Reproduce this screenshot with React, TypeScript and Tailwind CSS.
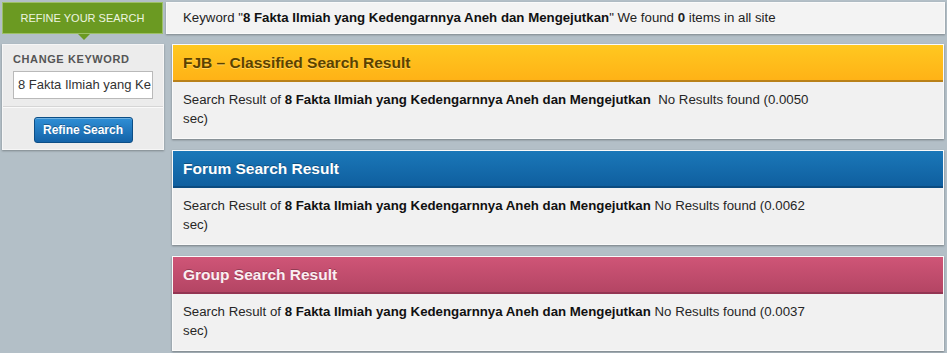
import React from "react";

const KW = "8 Fakta Ilmiah yang Kedengarnnya Aneh dan Mengejutkan";

function Panel({
  title,
  headerClass,
  titleClass,
  time,
  extraSpace,
}: {
  title: string;
  headerClass: string;
  titleClass: string;
  time: string;
  extraSpace?: boolean;
}) {
  return (
    <div className="border border-[#fafafa] bg-[#f1f1f1] shadow-[0_1px_2px_rgba(0,0,0,0.35)]">
      <div className={`h-[37px] flex items-center px-[10px] border-b-[2px] ${headerClass}`}>
        <span className={`text-[15.5px] font-bold ${titleClass}`}>{title}</span>
      </div>
      <div className="h-[56px] px-[10px] pt-[8px] text-[13.25px] leading-[19px] text-[#262626]">
        <div className="w-[632px]">
          Search Result of <b className="text-[#111]">{KW}</b>
          {extraSpace ? "\u00a0 " : " "}No Results found ({time} sec)
        </div>
      </div>
    </div>
  );
}

export default function App() {
  return (
    <div
      className="w-[947px] h-[353px] overflow-hidden bg-[#b3bfc7] relative"
      style={{ fontFamily: '"Liberation Sans", Arial, sans-serif' }}
    >
      <div className="flex gap-[3px] pt-[2px] pl-[2px] pr-[2px]">
        <div className="relative w-[161px] h-[32px] bg-[#6b9a22] border border-[#9dc066] flex items-center justify-center">
          <span className="text-[11px] text-[#eef5e0]">REFINE YOUR SEARCH</span>
          <div className="absolute left-[75px] top-[31px] w-0 h-0 border-l-[6px] border-r-[6px] border-t-[6px] border-l-transparent border-r-transparent border-t-[#6b9a22]" />
        </div>
        <div className="flex-1 h-[32px] bg-[#f3f3f3] border border-[#fafafa] shadow-[0_1px_2px_rgba(0,0,0,0.3)] flex items-center pl-[16px] text-[13.25px] text-[#222]">
          <span>
            Keyword "<b className="text-[#111]">{KW}</b>" We found <b>0</b> items in all site
          </span>
        </div>
      </div>

      <div className="flex gap-[8px] pl-[2px] pr-[3px] pt-[10px]">
        <div className="w-[162px] shrink-0 self-start bg-[#ececec] border border-[#f6f6f6] shadow-[0_1px_2px_rgba(0,0,0,0.3)]">
          <div className="px-[10px] pt-[8px] pb-[7px] border-b border-[#d6d6d6]">
            <div className="text-[11px] font-bold text-[#555] tracking-[0.6px] leading-[13px]">CHANGE KEYWORD</div>
            <div className="mt-[5px] h-[28px] bg-white border border-[#b9b9b9] flex items-center px-[4px] overflow-hidden">
              <span className="text-[13px] text-[#333] whitespace-nowrap">8 Fakta Ilmiah yang Ke</span>
            </div>
          </div>
          <div className="border-t border-[#fafafa] flex justify-center pt-[9px] pb-[6px]">
            <div className="w-[99px] h-[26px] rounded-[3px] border border-[#0c4e86] bg-gradient-to-b from-[#2f8fd6] to-[#1463a8] flex items-center justify-center shadow-[inset_0_1px_0_rgba(255,255,255,0.3)]">
              <span className="text-[12px] font-bold text-white [text-shadow:0_-1px_0_rgba(0,0,0,0.3)]">Refine Search</span>
            </div>
          </div>
        </div>

        <div className="flex-1 flex flex-col gap-[11px]">
          <Panel
            title="FJB – Classified Search Result"
            headerClass="bg-gradient-to-b from-[#ffc820] to-[#ffb216] border-[#b98119]"
            titleClass="text-[#5b4200] [text-shadow:0_1px_0_rgba(255,230,150,0.6)]"
            time="0.0050"
            extraSpace
          />
          <Panel
            title="Forum Search Result"
            headerClass="bg-gradient-to-b from-[#1b78b9] to-[#0f5f9f] border-[#0b4b80]"
            titleClass="text-white [text-shadow:0_-1px_0_rgba(0,0,0,0.3)]"
            time="0.0062"
          />
          <Panel
            title="Group Search Result"
            headerClass="bg-gradient-to-b from-[#cf5577] to-[#b44564] border-[#933553]"
            titleClass="text-[#fbeef2] [text-shadow:0_-1px_0_rgba(0,0,0,0.25)]"
            time="0.0037"
          />
        </div>
      </div>
    </div>
  );
}
